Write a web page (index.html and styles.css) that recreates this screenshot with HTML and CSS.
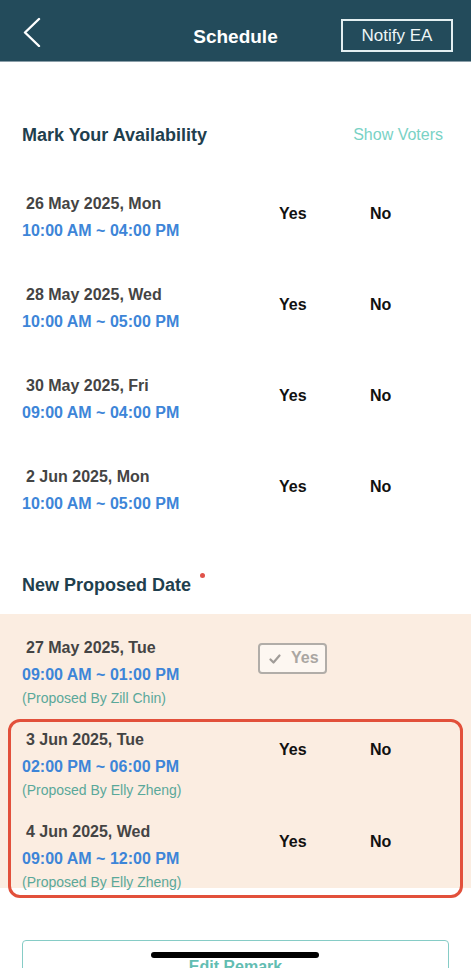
FILE: index.html
```html
<!DOCTYPE html>
<html lang="en-US">
  <head>
    <title>Schedule</title>
    <meta charset="utf-8" />
    <meta name="viewport" content="width=device-width, initial-scale=1.0" />
    <link rel="stylesheet" href="styles.css">
  </head>
  <body>
    <header class="top-bar">
      <button class="back-btn" type="button" aria-label="Back">
        <svg width="20" height="30" viewBox="0 0 20 30">
          <polyline points="17,2 3,15.5 17,29" fill="none" stroke="#fff" stroke-width="2.4" stroke-linecap="round" stroke-linejoin="round" />
        </svg>
      </button>
      <h1 class="top-title">Schedule</h1>
      <button class="notify-btn" type="button">Notify EA</button>
    </header>

    <main class="page">
      <div class="section-head">
        <h2>Mark Your Availability</h2>
        <a class="show-voters" href="#">Show Voters</a>
      </div>

      <ul class="slots">
        <li class="slot">
          <div class="slot-info">
            <p class="slot-date">26 May 2025, Mon</p>
            <p class="slot-time">10:00 AM ~ 04:00 PM</p>
          </div>
          <div class="choices"><span class="choice">Yes</span><span class="choice">No</span></div>
        </li>
        <li class="slot">
          <div class="slot-info">
            <p class="slot-date">28 May 2025, Wed</p>
            <p class="slot-time">10:00 AM ~ 05:00 PM</p>
          </div>
          <div class="choices"><span class="choice">Yes</span><span class="choice">No</span></div>
        </li>
        <li class="slot">
          <div class="slot-info">
            <p class="slot-date">30 May 2025, Fri</p>
            <p class="slot-time">09:00 AM ~ 04:00 PM</p>
          </div>
          <div class="choices"><span class="choice">Yes</span><span class="choice">No</span></div>
        </li>
        <li class="slot">
          <div class="slot-info">
            <p class="slot-date">2 Jun 2025, Mon</p>
            <p class="slot-time">10:00 AM ~ 05:00 PM</p>
          </div>
          <div class="choices"><span class="choice">Yes</span><span class="choice">No</span></div>
        </li>
      </ul>

      <div class="section-head proposed-head">
        <h2>New Proposed Date <span class="dot"></span></h2>
      </div>

      <div class="proposed">
        <ul class="slots">
          <li class="slot">
            <div class="slot-info">
              <p class="slot-date">27 May 2025, Tue</p>
              <p class="slot-time">09:00 AM ~ 01:00 PM</p>
              <p class="slot-by">(Proposed By Zill Chin)</p>
            </div>
            <div class="choices">
              <span class="picked">
                <svg width="12" height="10" viewBox="0 0 12 10">
                  <polyline points="1.5,5.5 4.5,8.5 10.5,1.5" fill="none" stroke="#a09c98" stroke-width="2.2" stroke-linecap="round" stroke-linejoin="round" />
                </svg>
                Yes
              </span>
            </div>
          </li>
          <li class="slot">
            <div class="slot-info">
              <p class="slot-date">3 Jun 2025, Tue</p>
              <p class="slot-time">02:00 PM ~ 06:00 PM</p>
              <p class="slot-by">(Proposed By Elly Zheng)</p>
            </div>
            <div class="choices"><span class="choice">Yes</span><span class="choice">No</span></div>
          </li>
          <li class="slot">
            <div class="slot-info">
              <p class="slot-date">4 Jun 2025, Wed</p>
              <p class="slot-time">09:00 AM ~ 12:00 PM</p>
              <p class="slot-by">(Proposed By Elly Zheng)</p>
            </div>
            <div class="choices"><span class="choice">Yes</span><span class="choice">No</span></div>
          </li>
        </ul>
        <div class="highlight"></div>
      </div>

      <button class="remark-btn" type="button">Edit Remark</button>
    </main>

    <div class="home-bar"></div>
  </body>
</html>
```

FILE: styles.css
```css
* {
  box-sizing: border-box;
}
body {
  background-color: #fff;
  color: #333;
  font: 16px / 1.4 "Liberation Sans", Helvetica, Arial, sans-serif;
  margin: 0;
  height: 968px;
  overflow: hidden;
  position: relative;
}
p,
h1,
h2,
ul {
  margin: 0;
  padding: 0;
}
ul {
  list-style: none;
}
button {
  font-family: inherit;
  background: none;
  cursor: pointer;
}

/* header */
.top-bar {
  height: 62px;
  background-color: #234b5b;
  border-bottom: 1px solid #8a9ea8;
  display: flex;
  align-items: center;
  justify-content: space-between;
  padding: 0 18px 0 22px;
  position: relative;
}
.back-btn {
  border: none;
  padding: 0;
  width: 24px;
  height: 30px;
  display: flex;
  align-items: center;
  margin-top: 2px;
}
.top-title {
  position: absolute;
  left: 0;
  right: 0;
  text-align: center;
  font-size: 19px;
  font-weight: bold;
  color: #fff;
  pointer-events: none;
  line-height: 22px;
  top: 26px;
}
.notify-btn {
  border: 2px solid #e3eff1;
  color: #eef6f7;
  font-size: 17px;
  width: 112px;
  height: 33px;
  padding: 0;
  margin-top: 10px;
}

/* sections */
.page {
  padding-top: 62px;
}
.section-head {
  display: flex;
  justify-content: space-between;
  align-items: center;
  padding: 0 28px 0 22px;
  height: 22px;
}
.section-head h2 {
  font-size: 18px;
  font-weight: bold;
  color: #1f3f4e;
  line-height: 22px;
}
.show-voters {
  color: #79d2c5;
  font-size: 16px;
  text-decoration: none;
}
.dot {
  display: inline-block;
  width: 5px;
  height: 5px;
  border-radius: 50%;
  background-color: #e0524a;
  vertical-align: top;
  margin: -1px 0 0 4px;
}

.slots {
  display: flex;
  flex-direction: column;
  gap: 42px;
  padding: 47px 0 0 22px;
}
.slot {
  display: flex;
}
.slot-info {
  width: 257px;
}
.slot-date {
  font-size: 16px;
  font-weight: bold;
  color: #444;
  line-height: 22px;
  padding-left: 4px;
}
.slot-time {
  font-size: 16px;
  font-weight: bold;
  color: #3d85d8;
  line-height: 22px;
  margin-top: 5px;
}
.slot-by {
  font-size: 14px;
  color: #5aa89a;
  line-height: 18px;
  margin-top: 3px;
}
.choices {
  display: flex;
  margin-top: 10px;
  height: 22px;
}
.choice {
  width: 91px;
  font-size: 16px;
  font-weight: bold;
  color: #111;
  line-height: 22px;
}
.picked {
  display: flex;
  align-items: center;
  gap: 10px;
  width: 69px;
  height: 31px;
  margin: -4px 0 0 -21px;
  padding-left: 9px;
  border: 2px solid #b1ada8;
  border-radius: 4px;
  background-color: #fdf7f1;
  color: #aaa6a2;
  font-size: 16px;
  font-weight: bold;
}

/* proposed dates */
.proposed-head {
  margin-top: 59px;
}
.proposed {
  margin-top: 18px;
  background-color: #fbede1;
  position: relative;
  height: 274px;
}
.proposed .slots {
  gap: 22px;
  padding-top: 23px;
}
.highlight {
  position: absolute;
  left: 8px;
  top: 105px;
  width: 455px;
  height: 179px;
  border: 3px solid #e2503b;
  border-radius: 12px;
  pointer-events: none;
}

.remark-btn {
  display: block;
  margin: 52px 0 0 22px;
  width: 427px;
  height: 50px;
  border: 1px solid #86ccc6;
  border-radius: 4px;
  color: #62bdb2;
  font-size: 16px;
  font-weight: bold;
  padding-top: 4px;
}

.home-bar {
  position: absolute;
  left: 151px;
  top: 952px;
  width: 168px;
  height: 6px;
  border-radius: 3px;
  background-color: #000;
}
```
